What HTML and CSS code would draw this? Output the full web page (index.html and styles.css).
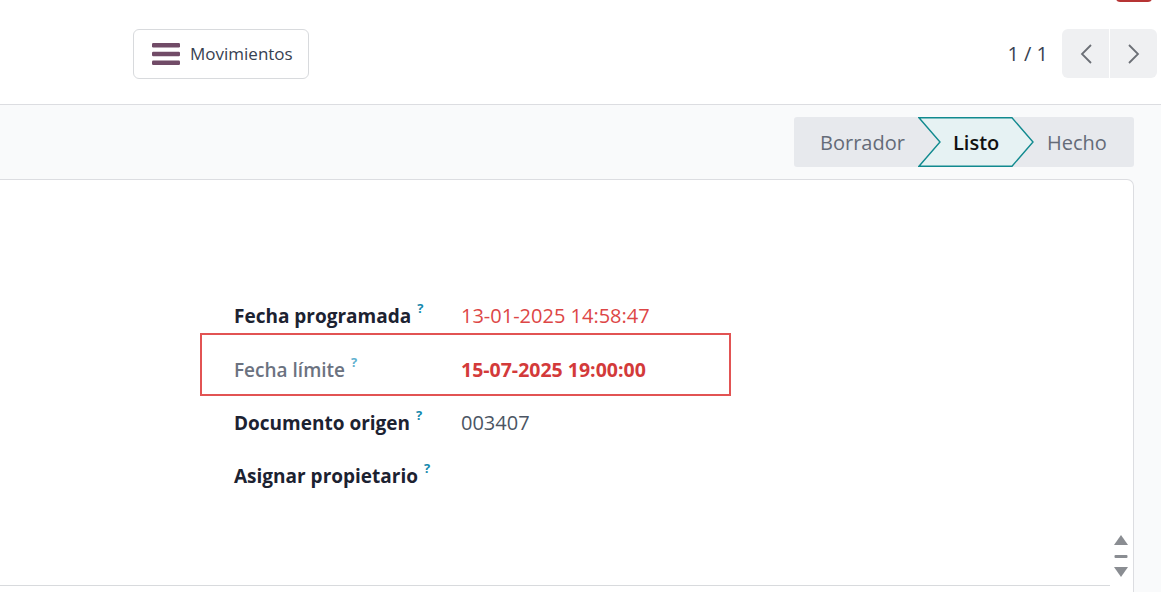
FILE: index.html
```html
<!DOCTYPE html>
<html lang="es">
<head>
<meta charset="utf-8">
<title>Movimiento</title>
<link rel="stylesheet" href="styles.css">
</head>
<body>
<div class="page">
  <div class="topbar">
    <span class="top-badge"></span>
    <button class="btn-moves">
      <svg class="ham" width="28" height="22" viewBox="0 0 28 22"><rect x="0" y="0" width="28" height="4.4" rx="1.2"/><rect x="0" y="8.8" width="28" height="4.4" rx="1.2"/><rect x="0" y="17.6" width="28" height="4.4" rx="1.2"/></svg>
      <span>Movimientos</span>
    </button>
    <div class="pager">
      <span class="pager-val">1 / 1</span>
      <div class="pager-btns">
        <button class="pbtn"><svg width="14" height="22" viewBox="0 0 14 22"><path d="M12 2 L3 11 L12 20" fill="none" stroke="#6b6f76" stroke-width="1.8"/></svg></button>
        <button class="pbtn"><svg width="14" height="22" viewBox="0 0 14 22"><path d="M2 2 L11 11 L2 20" fill="none" stroke="#6b6f76" stroke-width="1.8"/></svg></button>
      </div>
    </div>
  </div>
  <div class="main">
    <div class="statusrow">
      <div class="statusbar">
        <div class="st st-first">Borrador</div>
        <div class="st st-cur">
          <svg class="st-shape" width="117" height="50" viewBox="0 0 117 50" preserveAspectRatio="none"><path d="M1 0.8 L94 0.8 L115 25 L94 49.2 L1 49.2 L22 25 Z" fill="#e6f2f3" stroke="#118a8f" stroke-width="1.4"/></svg>
          <span>Listo</span>
        </div>
        <div class="st st-last">Hecho</div>
      </div>
    </div>
    <div class="card">
      <div class="fields">
        <div class="row"><div class="lbl">Fecha programada<sup>?</sup></div><div class="val val-red">13-01-2025 14:58:47</div></div>
        <div class="row row-hl"><div class="lbl lbl-muted">Fecha límite<sup>?</sup></div><div class="val val-redb">15-07-2025 19:00:00</div></div>
        <div class="row"><div class="lbl">Documento origen<sup>?</sup></div><div class="val">003407</div></div>
        <div class="row"><div class="lbl">Asignar propietario<sup>?</sup></div><div class="val"></div></div>
      </div>
      <div class="card-sep"></div>
      <div class="scrollctl">
        <svg width="16" height="48" viewBox="0 0 16 48"><path d="M8 2 L15 12 L1 12 Z" fill="#8a8d92"/><rect x="1.5" y="22" width="13" height="3" rx="1" fill="#8a8d92"/><path d="M1 34 L15 34 L8 44 Z" fill="#8a8d92"/></svg>
      </div>
    </div>
  </div>
</div>
</body>
</html>
```
FILE: styles.css
```css
* { box-sizing: border-box; }
html, body { margin: 0; padding: 0; }
body {
  font-family: "Open Sans", "Noto Sans", "DejaVu Sans", sans-serif;
  background: #f9fafb;
  color: #1f2430;
  width: 1161px;
  height: 592px;
  overflow: hidden;
}
.page { display: flex; flex-direction: column; height: 592px; }
.topbar {
  position: relative;
  height: 105px;
  background: #fff;
  border-bottom: 1px solid #dcdde1;
  display: flex;
  align-items: center;
  padding: 0 4px 0 133px;
  flex-shrink: 0;
}
.top-badge {
  position: absolute;
  top: -10px;
  left: 1116px;
  width: 36px;
  height: 12px;
  background: #b63434;
  border-radius: 4px;
}
.btn-moves {
  height: 50px;
  width: 176px;
  display: flex;
  align-items: center;
  gap: 10px;
  padding: 0 0 0 18px;
  background: #fff;
  border: 1px solid #d8dadd;
  border-radius: 6px;
  font-family: inherit;
  font-size: 17px;
  color: #374151;
  margin-top: 3px;
}
.ham { fill: #714b67; }
.pager { margin-left: auto; display: flex; align-items: center; gap: 14px; margin-top: 3px; }
.pager-val { font-size: 20px; color: #374151; }
.pager-btns { display: flex; gap: 1px; background: #fff; border-radius: 6px; overflow: hidden; }
.pbtn {
  width: 47px; height: 49px;
  background: #eff0f2;
  border: 0;
  display: flex; align-items: center; justify-content: center;
  padding: 0;
}
.main { flex: 1; display: flex; flex-direction: column; padding: 12px 27px 0 0; }
.statusrow { display: flex; justify-content: flex-end; }
.statusbar {
  display: flex;
  height: 50px;
  background: #e7e9ed;
  border-radius: 3px;
  font-size: 20px;
  color: #646b78;
}
.st { display: flex; align-items: center; height: 50px; }
.st-first { width: 124px; padding-left: 26px; }
.st-cur { position: relative; width: 115px; padding-left: 35px; color: #111; font-weight: 600; }
.st-shape { position: absolute; left: 0; top: 0; }
.st-cur span { position: relative; }
.st-last { width: 101px; padding-left: 14px; }
.card {
  position: relative;
  margin-top: 12px;
  margin-left: -2px;
  flex: 1;
  background: #fff;
  border: 1px solid #dcdde1;
  border-bottom: 0;
  border-top-right-radius: 7px;
  padding-top: 109px;
}
.fields { width: 531px; margin-left: 201px; display: flex; flex-direction: column; }
.row {
  position: relative;
  height: 53px;
  display: grid;
  grid-template-columns: 227px 1fr;
  align-items: center;
  padding-left: 34px;
  font-size: 19px;
  line-height: 24px;
}
.row-hl { margin-top: 1px; }
.row-hl::after {
  content: "";
  position: absolute;
  left: 0; right: 0; top: -10px; bottom: 0;
  border: 2px solid #e25353;
  pointer-events: none;
}
.lbl { font-weight: 700; color: #1c2231; white-space: nowrap; }
.lbl sup { font-size: 13px; color: #1589ad; margin-left: 6px; vertical-align: 10px; line-height: 0; font-weight: 700; }
.lbl-muted { color: #6b7280; font-weight: 600; }
.lbl-muted sup { color: #5fb1cf; }
.val { color: #4b5563; font-size: 20px; }
.val-red { color: #dd4646; }
.val-redb { color: #d33a3a; font-weight: 700; font-size: 19.5px; }
.card-sep {
  position: absolute;
  left: 0; right: 23px; top: 405px;
  border-top: 1px solid #d8dadd;
}
.scrollctl {
  position: absolute;
  right: 4px; top: 353px;
  width: 16px; height: 48px;
}
```
